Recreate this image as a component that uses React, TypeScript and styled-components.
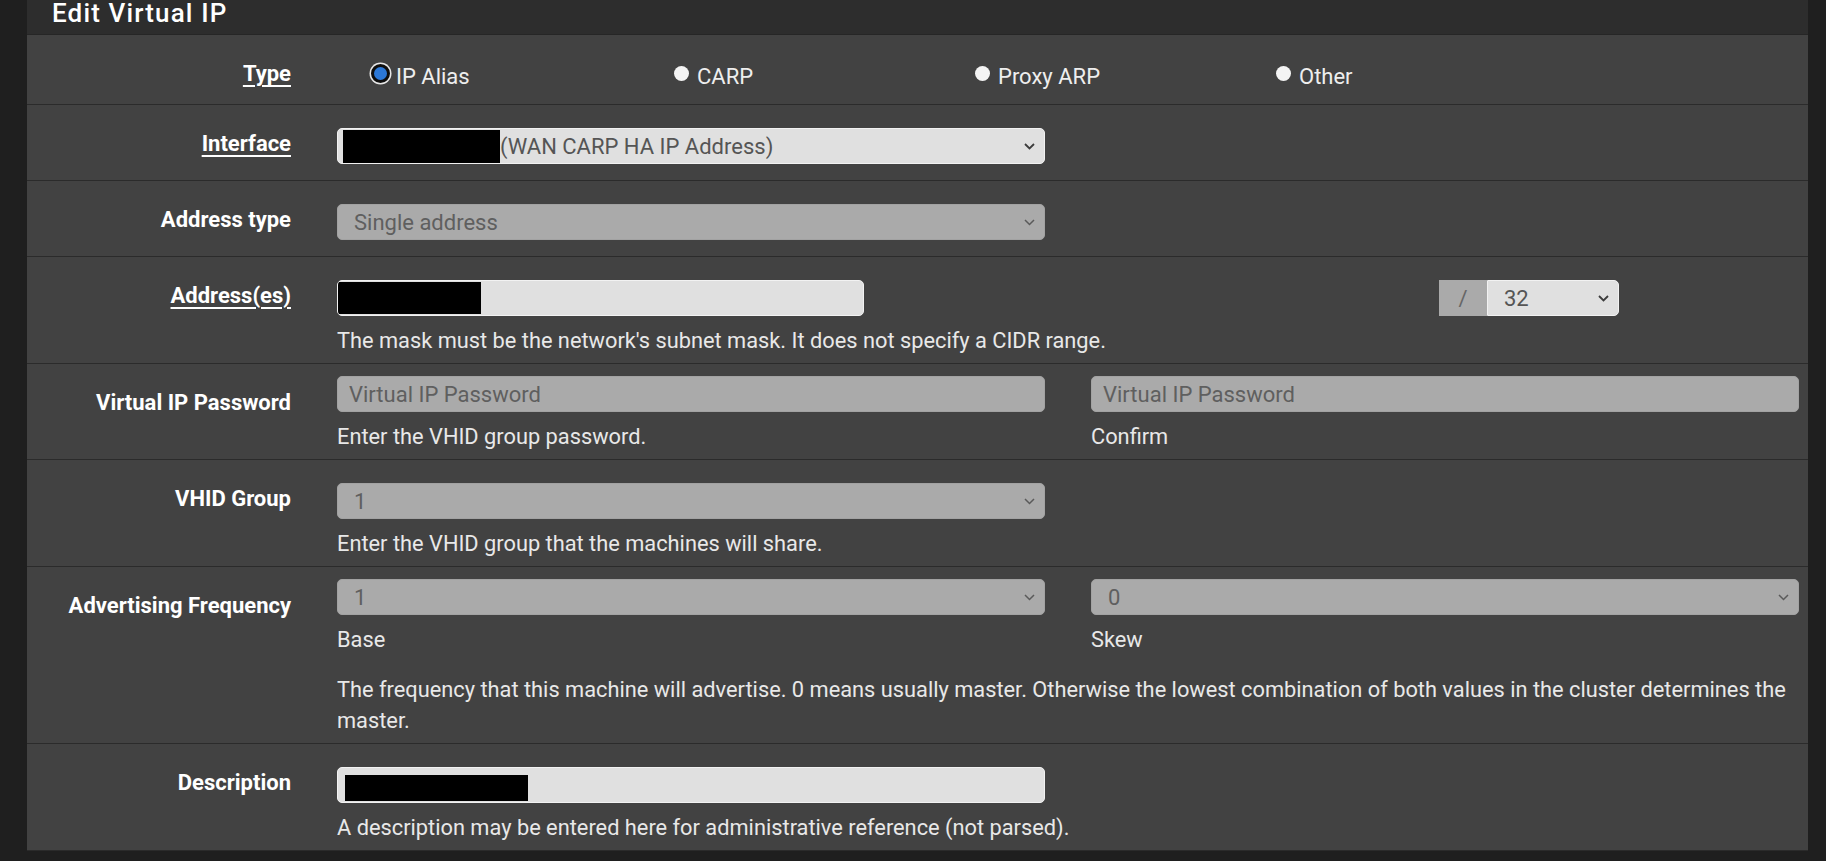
import React from 'react';
import styled, { createGlobalStyle } from 'styled-components';

const GlobalStyle = createGlobalStyle`
  html, body {
    margin: 0;
    padding: 0;
    background: #1f1f1f;
  }
  body {
    font-family: Roboto, "Noto Sans", Arial, sans-serif;
  }
  * {
    box-sizing: border-box;
  }
`;

const Page = styled.div`
  padding: 0 18px 8px 27px;
  min-height: 861px;
`;

const Panel = styled.section`
  background: #424242;
`;

const PanelHeading = styled.header`
  height: 35px;
  padding-left: 25px;
  background: #2d2d2d;
  border-bottom: 1px solid #262626;
`;

const PanelTitle = styled.h2`
  margin: 0;
  font-size: 26px;
  line-height: 26px;
  font-weight: 500;
  letter-spacing: 1.15px;
  color: #fff;
`;

const Row = styled.div`
  display: grid;
  grid-template-columns: 264px 1fr;
  column-gap: 46px;
  padding: 23px 9px 7px 0;
  border-bottom: 1px solid #2b2b2b;
`;

const Label = styled.div<{ $link?: boolean }>`
  text-align: right;
  font-size: 22px;
  line-height: 31px;
  font-weight: 700;
  color: #fff;
  text-decoration: ${(p) => (p.$link ? 'underline' : 'none')};
  text-decoration-thickness: 2px;
  text-underline-offset: 4px;
`;

const Controls = styled.div<{ $raise?: boolean }>`
  display: grid;
  grid-template-columns: 1fr 1fr;
  column-gap: 46px;
  align-content: start;
  margin-top: ${(p) => (p.$raise ? '-11px' : '0')};
`;

const Field = styled.div<{ $wide?: boolean }>`
  display: flex;
  flex-direction: column;
  min-width: 0;
  grid-column: ${(p) => (p.$wide ? '1 / -1' : 'auto')};
`;

const Help = styled.div<{ $spaced?: boolean }>`
  margin-top: ${(p) => (p.$spaced ? '19px' : '0')};
  font-size: 21.8px;
  line-height: 31px;
  color: #e8e8e8;
`;

const RadioGroup = styled.div`
  grid-column: 1 / -1;
  display: grid;
  grid-template-columns: repeat(4, 301px);
  height: 31px;
  margin: 3px 0 5px 33px;
`;

const RadioItem = styled.label`
  display: flex;
  align-items: flex-start;
  gap: 6px;
  font-size: 22px;
  line-height: 31px;
  color: #eeeeee;
`;

const RadioBox = styled.span`
  width: 20px;
  height: 20px;
  margin-top: 2px;
  display: flex;
  align-items: center;
  justify-content: center;
  flex-shrink: 0;
`;

const RadioDot = styled.span<{ $checked?: boolean }>`
  border-radius: 50%;
  width: ${(p) => (p.$checked ? '19px' : '15px')};
  height: ${(p) => (p.$checked ? '19px' : '15px')};
  background: ${(p) => (p.$checked ? '#2b78d8' : '#f4f4f4')};
  border: ${(p) => (p.$checked ? '3px solid #0e0e0e' : 'none')};
  box-shadow: ${(p) => (p.$checked ? '0 0 0 1.5px #e6e6e6' : 'none')};
`;

const SelectBox = styled.div<{ $disabled?: boolean; $flush?: boolean }>`
  position: relative;
  height: 36px;
  margin-bottom: 9px;
  display: flex;
  align-items: center;
  padding: 0 36px 0 ${(p) => (p.$flush ? '5px' : '16px')};
  border-radius: 5px;
  border: 1px solid ${(p) => (p.$disabled ? '#a2a2a2' : '#f2f2f2')};
  background: ${(p) => (p.$disabled ? '#aaaaaa' : '#e0e0e0')};
  color: ${(p) => (p.$disabled ? '#5f5f5f' : '#555555')};
  font-size: 22px;
  white-space: nowrap;
  overflow: hidden;
`;

const ChevronIcon = styled.svg<{ $disabled?: boolean }>`
  position: absolute;
  right: 9px;
  top: 50%;
  width: 11px;
  height: 7px;
  margin-top: -3px;
  stroke: ${(p) => (p.$disabled ? '#5a5a5a' : '#3c3c3c')};
  fill: none;
`;

const TextBox = styled.div`
  height: 36px;
  margin-bottom: 9px;
  border-radius: 5px;
  border: 1px solid #f2f2f2;
  background: #e0e0e0;
  overflow: hidden;
`;

const Redaction = styled.span<{ $w: number; $h: number; $left?: number; $top?: number }>`
  display: block;
  flex-shrink: 0;
  width: ${(p) => p.$w}px;
  height: ${(p) => p.$h}px;
  margin-left: ${(p) => p.$left ?? 0}px;
  margin-top: ${(p) => p.$top ?? 0}px;
  background: #000;
`;

const InterfaceValue = styled.div`
  display: flex;
  align-items: center;
  height: 100%;
`;

const PasswordInput = styled.input`
  height: 36px;
  margin: 0 0 9px;
  padding: 0 11px;
  border-radius: 5px;
  border: 1px solid #a2a2a2;
  background: #aaaaaa;
  font-family: inherit;
  font-size: 22px;
  color: #5f5f5f;
  &::placeholder {
    color: #5f5f5f;
    opacity: 1;
  }
`;

const AddressLine = styled.div`
  display: grid;
  grid-template-columns: 527px 1fr 180px 180px;
`;

const MaskGroup = styled.div`
  grid-column: 3;
  display: flex;
  height: 36px;
`;

const MaskAddon = styled.span`
  width: 48px;
  display: flex;
  align-items: center;
  justify-content: center;
  background: #aaaaaa;
  color: #666;
  font-size: 22px;
`;

const MaskSelect = styled(SelectBox)`
  flex: 1;
  border-radius: 0 5px 5px 0;
  margin-bottom: 0;
`;

const Chevron = ({ disabled }: { disabled?: boolean }) => (
  <ChevronIcon $disabled={disabled} viewBox="0 0 11 7">
    <polyline points="1,1 5.5,5.5 10,1" strokeWidth={disabled ? 1.5 : 1.8} />
  </ChevronIcon>
);

const types = ['IP Alias', 'CARP', 'Proxy ARP', 'Other'];

export default function App() {
  return (
    <>
      <GlobalStyle />
      <Page>
        <Panel>
          <PanelHeading>
            <PanelTitle>Edit Virtual IP</PanelTitle>
          </PanelHeading>

          <Row>
            <Label $link>Type</Label>
            <Controls>
              <RadioGroup>
                {types.map((t, i) => (
                  <RadioItem key={t}>
                    <RadioBox>
                      <RadioDot $checked={i === 0} />
                    </RadioBox>
                    {t}
                  </RadioItem>
                ))}
              </RadioGroup>
            </Controls>
          </Row>

          <Row>
            <Label $link>Interface</Label>
            <Controls>
              <Field>
                <SelectBox $flush>
                  <InterfaceValue>
                    <Redaction $w={157} $h={33} />
                    (WAN CARP HA IP Address)
                  </InterfaceValue>
                  <Chevron />
                </SelectBox>
              </Field>
            </Controls>
          </Row>

          <Row>
            <Label>Address type</Label>
            <Controls>
              <Field>
                <SelectBox $disabled>
                  Single address
                  <Chevron disabled />
                </SelectBox>
              </Field>
            </Controls>
          </Row>

          <Row>
            <Label $link>Address(es)</Label>
            <Controls>
              <Field $wide>
                <AddressLine>
                  <TextBox>
                    <Redaction $w={143} $h={32} $top={1} />
                  </TextBox>
                  <MaskGroup>
                    <MaskAddon>/</MaskAddon>
                    <MaskSelect>
                      32
                      <Chevron />
                    </MaskSelect>
                  </MaskGroup>
                </AddressLine>
                <Help>The mask must be the network's subnet mask. It does not specify a CIDR range.</Help>
              </Field>
            </Controls>
          </Row>

          <Row>
            <Label>Virtual IP Password</Label>
            <Controls $raise>
              <Field>
                <PasswordInput type="password" placeholder="Virtual IP Password" disabled />
                <Help>Enter the VHID group password.</Help>
              </Field>
              <Field>
                <PasswordInput type="password" placeholder="Virtual IP Password" disabled />
                <Help>Confirm</Help>
              </Field>
            </Controls>
          </Row>

          <Row>
            <Label>VHID Group</Label>
            <Controls>
              <Field>
                <SelectBox $disabled>
                  1
                  <Chevron disabled />
                </SelectBox>
              </Field>
              <Field $wide>
                <Help>Enter the VHID group that the machines will share.</Help>
              </Field>
            </Controls>
          </Row>

          <Row>
            <Label>Advertising Frequency</Label>
            <Controls $raise>
              <Field>
                <SelectBox $disabled>
                  1
                  <Chevron disabled />
                </SelectBox>
                <Help>Base</Help>
              </Field>
              <Field>
                <SelectBox $disabled>
                  0
                  <Chevron disabled />
                </SelectBox>
                <Help>Skew</Help>
              </Field>
              <Field $wide>
                <Help $spaced>
                  The frequency that this machine will advertise. 0 means usually master. Otherwise the lowest
                  combination of both values in the cluster determines the master.
                </Help>
              </Field>
            </Controls>
          </Row>

          <Row>
            <Label>Description</Label>
            <Controls>
              <Field>
                <TextBox>
                  <Redaction $w={183} $h={26} $left={7} $top={7} />
                </TextBox>
              </Field>
              <Field $wide>
                <Help>A description may be entered here for administrative reference (not parsed).</Help>
              </Field>
            </Controls>
          </Row>
        </Panel>
      </Page>
    </>
  );
}
